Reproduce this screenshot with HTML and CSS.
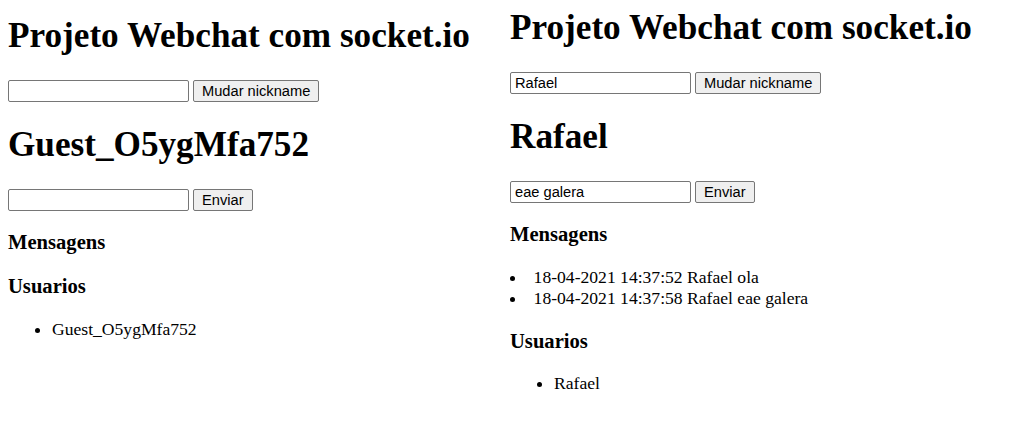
FILE: index.html
```html
<!DOCTYPE html>
<html lang="pt">
<head>
<meta charset="utf-8">
<title>Projeto Webchat com socket.io</title>
<link rel="stylesheet" href="styles.css">
</head>
<body>
<div class="page">
  <section class="panel panel-left">
    <h1 class="title">Projeto Webchat com socket.io</h1>
    <form class="row">
      <input class="field" type="text" value="">
      <button class="btn" type="button">Mudar nickname</button>
    </form>
    <h1 class="nick">Guest_O5ygMfa752</h1>
    <form class="row">
      <input class="field" type="text" value="">
      <button class="btn" type="button">Enviar</button>
    </form>
    <h3 class="section">Mensagens</h3>
    <ul class="messages"></ul>
    <h3 class="section">Usuarios</h3>
    <ul class="users">
      <li>Guest_O5ygMfa752</li>
    </ul>
  </section>
  <section class="panel panel-right">
    <h1 class="title">Projeto Webchat com socket.io</h1>
    <form class="row">
      <input class="field" type="text" value="Rafael">
      <button class="btn" type="button">Mudar nickname</button>
    </form>
    <h1 class="nick">Rafael</h1>
    <form class="row">
      <input class="field" type="text" value="eae galera">
      <button class="btn" type="button">Enviar</button>
    </form>
    <h3 class="section">Mensagens</h3>
    <ul class="messages">
      <li>18-04-2021 14:37:52 Rafael ola</li>
      <li>18-04-2021 14:37:58 Rafael eae galera</li>
    </ul>
    <h3 class="section">Usuarios</h3>
    <ul class="users">
      <li>Rafael</li>
    </ul>
  </section>
</div>
</body>
</html>
```

FILE: styles.css
```css
html, body {
  margin: 0;
  padding: 0;
  background: #ffffff;
}

body {
  font-family: "Liberation Serif", "Times New Roman", serif;
  font-size: 17.6px;
  color: #000000;
}

.page {
  display: grid;
  grid-template-columns: 502px 1fr;
}

.panel {
  padding: 0 8px;
}

.title,
.nick {
  font-size: 35.2px;
  font-weight: bold;
  margin: 23.6px 0;
}

.panel-left .title {
  margin-top: 16px;
}

.panel-right .title {
  margin-top: 8px;
}

.row {
  display: flex;
  align-items: center;
  gap: 4px;
  margin: 0;
}

.field {
  box-sizing: border-box;
  width: 181px;
  height: 22px;
  margin: 0;
  padding: 1px 4px;
  border: 1px solid #767676;
  border-radius: 2px;
  background: #ffffff;
  font-family: "Liberation Sans", Arial, sans-serif;
  font-size: 14.67px;
  color: #000000;
}

.btn {
  box-sizing: border-box;
  height: 22px;
  margin: 0;
  padding: 0 8px;
  border: 1px solid #767676;
  border-radius: 2px;
  background: #efefef;
  font-family: "Liberation Sans", Arial, sans-serif;
  font-size: 14.67px;
  color: #000000;
}

.section {
  font-size: 20.6px;
  font-weight: bold;
  margin: 20.6px 0;
}

.messages {
  margin: 17.6px 0;
  padding: 0;
  list-style-position: inside;
}

.users {
  margin: 17.6px 0;
  padding-left: 44px;
}
```
